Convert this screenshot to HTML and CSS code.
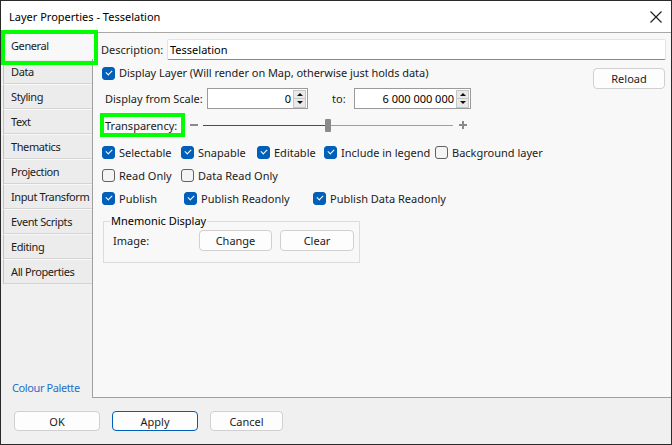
FILE: index.html
```html
<!DOCTYPE html>
<html>
<head>
<meta charset="utf-8">
<link rel="stylesheet" href="styles.css">
</head>
<body>
<div class="window">
  <div class="titlebar">
    <span class="title">Layer Properties - Tesselation</span>
    <svg class="close" width="12" height="12" viewBox="0 0 12 12"><path d="M0.5 0.5L11.5 11.5M11.5 0.5L0.5 11.5" stroke="#1b1b1b" stroke-width="1.1" fill="none"/></svg>
  </div>
  <div class="main">
    <div class="sidebar">
      <ul class="tabs">
        <li class="tab active">General</li>
        <li class="tab">Data</li>
        <li class="tab">Styling</li>
        <li class="tab">Text</li>
        <li class="tab">Thematics</li>
        <li class="tab">Projection</li>
        <li class="tab">Input Transform</li>
        <li class="tab">Event Scripts</li>
        <li class="tab">Editing</li>
        <li class="tab">All Properties</li>
      </ul>
      <a class="palette">Colour Palette</a>
    </div>
    <div class="panel">
      <div class="row desc-row">
        <span class="desc-label">Description:</span>
        <div class="textbox">Tesselation</div>
      </div>
      <div class="row layer-row">
        <span class="box checked first"></span>
        <span class="layer-text">Display Layer (Will render on Map, otherwise just holds data)</span>
        <button class="btn reload">Reload</button>
      </div>
      <div class="row scale-row">
        <span class="scale-label">Display from Scale:</span>
        <div class="spin s1"><span class="val">0</span><span class="arrows"><span class="up"></span><span class="down"></span></span></div>
        <span class="to-label">to:</span>
        <div class="spin s2"><span class="val">6 000 000 000</span><span class="arrows"><span class="up"></span><span class="down"></span></span></div>
      </div>
      <div class="row trans-row">
        <span class="trans-label">Transparency:</span>
        <span class="minus"></span>
        <div class="track">
          <span class="fill"></span>
          <span class="thumb"></span>
          <span class="rest"></span>
        </div>
        <span class="plus"></span>
      </div>
      <div class="row cbrow r1">
        <span class="chk w79"><span class="box checked"></span>Selectable</span>
        <span class="chk w76"><span class="box checked"></span>Snapable</span>
        <span class="chk w67"><span class="box checked"></span>Editable</span>
        <span class="chk w111"><span class="box checked"></span>Include in legend</span>
        <span class="chk"><span class="box"></span>Background layer</span>
      </div>
      <div class="row cbrow r2">
        <span class="chk w79"><span class="box"></span>Read Only</span>
        <span class="chk"><span class="box"></span>Data Read Only</span>
      </div>
      <div class="row cbrow r3">
        <span class="chk w82"><span class="box checked"></span>Publish</span>
        <span class="chk w129"><span class="box checked"></span>Publish Readonly</span>
        <span class="chk"><span class="box checked"></span>Publish Data Readonly</span>
      </div>
      <fieldset class="group">
        <legend>Mnemonic Display</legend>
        <div class="group-row">
          <span class="image-label">Image:</span>
          <button class="btn change">Change</button>
          <button class="btn clear">Clear</button>
        </div>
      </fieldset>
    </div>
  </div>
  <div class="footer">
    <button class="btn ok">OK</button>
    <button class="btn apply">Apply</button>
    <button class="btn cancel">Cancel</button>
  </div>
  <div class="hl hl-general"></div>
  <div class="hl hl-trans"></div>
</div>
</body>
</html>
```
FILE: styles.css
```css
* { box-sizing: border-box; }
body {
  margin: 0;
  background: #fff;
  font-family: "Noto Sans", sans-serif;
  font-size: 11px;
  color: #1b1b1b;
}
.window {
  position: relative;
  width: 672px;
  height: 445px;
  border: 1px solid #2a2a2a;
  display: flex;
  flex-direction: column;
  background: #f0f0f0;
  overflow: hidden;
}
.titlebar {
  flex: none;
  height: 32px;
  background: #fff;
  border-bottom: 1px solid #a8a8a8;
  display: flex;
  align-items: center;
  padding-left: 8px;
}
.title { color: #000; font-size: 11px; margin-top: -1px; }
.close { margin-left: auto; margin-right: 9px; }
.main { flex: none; display: flex; height: 365px; }
.sidebar {
  width: 91px;
  display: flex;
  flex-direction: column;
  background: #f0f0f0;
}
.tabs { list-style: none; margin: 0 0 0 2px; padding: 0; }
.tab {
  height: 25px;
  line-height: 23px;
  padding-left: 7px;
  background: #ececec;
  border-left: 1px solid #c2c2c2;
  border-top: 1px solid #f8f8f8;
  border-bottom: 1px solid #d4d4d4;
  white-space: nowrap;
  letter-spacing: -0.4px;
}
.tab.active {
  height: 26px;
  background: #f8f8f8;
  border-color: #f8f8f8;
  margin-right: -1px;
  position: relative;
}
.palette {
  margin-top: auto;
  margin-bottom: 3px;
  margin-left: 11px;
  line-height: 14px;
  color: #1f6fc5;
  letter-spacing: -0.4px;
}
.panel {
  flex: 1;
  background: #f8f8f8;
  border-left: 1px solid #a0a0a0;
  border-bottom: 1px solid #a0a0a0;
  padding: 6px 5px 0 8px;
}
.row { display: flex; align-items: center; }
.desc-row { height: 21px; }
.desc-label { width: 66px; }
.textbox {
  flex: 1;
  height: 21px;
  background: #fff;
  border: 1px solid #e3e3e3;
  border-bottom-color: #8a8a8a;
  border-radius: 2px;
  padding-left: 2px;
  line-height: 19px;
  color: #000;
}
.layer-row { height: 27px; margin-top: 1px; align-items: flex-start; }
.layer-row .box { margin-top: 6px; margin-left: 1px; margin-right: 4px; }
.layer-text { margin-top: 4px; line-height: 16px; letter-spacing: -0.05px; }
.btn {
  font-family: inherit;
  font-size: 11px;
  color: #1b1b1b;
  background: #fdfdfd;
  border: 1px solid #d0d0d0;
  border-radius: 4px;
  padding: 0;
  height: 21px;
}
.reload { margin-left: auto; margin-top: 7px; margin-right: 1px; width: 72px; }
.scale-row { height: 21px; }
.scale-label { margin-left: 4px; width: 102px; }
.spin {
  height: 21px;
  background: #fff;
  border: 1px solid #9a9a9a;
  display: flex;
  align-items: center;
  color: #000;
}
.s1 { width: 101px; }
.s2 { width: 117px; }
.val { flex: 1; text-align: right; padding-right: 2px; }
.arrows {
  width: 13px;
  height: 18px;
  margin-right: 1px;
  display: flex;
  flex-direction: column;
  border: 1px solid #c6c6c6;
  background: #e9e9e9;
}
.up, .down { flex: 1; position: relative; }
.up { border-bottom: 1px solid #c6c6c6; }
.up::after, .down::after {
  content: "";
  position: absolute;
  left: 3px;
  width: 0;
  height: 0;
  border-left: 3px solid transparent;
  border-right: 3px solid transparent;
}
.up::after { top: 2px; border-bottom: 3px solid #111; }
.down::after { top: 2px; border-top: 3px solid #111; }
.to-label { margin-left: 24px; width: 22px; }
.trans-row { height: 22px; margin-top: 5px; }
.trans-label { margin-left: 4px; width: 85px; }
.minus { width: 8px; height: 2px; background: #8a8a8a; }
.track {
  margin-left: 5px;
  width: 250px;
  height: 14px;
  display: flex;
  align-items: center;
}
.fill { width: 122px; height: 1px; background: #005fb8; }
.thumb { width: 6px; height: 13px; background: #8a8a8a; border-radius: 1px; }
.rest { flex: 1; height: 1px; background: #a0a0a0; }
.plus { margin-left: 6px; width: 8px; height: 8px; position: relative; }
.plus::before, .plus::after { content: ""; position: absolute; background: #8a8a8a; }
.plus::before { left: 0; top: 3px; width: 8px; height: 2px; }
.plus::after { left: 3px; top: 0; width: 2px; height: 8px; }
.cbrow { height: 20px; margin-top: 3px; }
.r1 { margin-top: 6px; }
.chk { display: flex; align-items: center; white-space: nowrap; }
.cbrow .chk:first-child { margin-left: 1px; }
.w79 { width: 79px; }
.w76 { width: 76px; }
.w67 { width: 67px; }
.w111 { width: 111px; }
.w82 { width: 82px; }
.w129 { width: 129px; }
.box {
  flex: none;
  width: 13px;
  height: 13px;
  border: 1px solid #616161;
  border-radius: 3px;
  background: #f4f4f4;
  margin-right: 4px;
  position: relative;
}
.box.checked { background: #005fb8; border-color: #005fb8; }
.box.checked::after {
  content: "";
  position: absolute;
  left: 3px;
  top: 2px;
  width: 5px;
  height: 3px;
  border-left: 1px solid #fff;
  border-bottom: 1px solid #fff;
  transform: rotate(-45deg);
}
.group {
  margin: 6px 0 0 2px;
  width: 257px;
  border: 1px solid #dcdcdc;
  padding: 0 0 11px 6px;
}
.group legend { padding: 0 1px; line-height: 14px; color: #000; }
.group-row { display: flex; align-items: center; height: 21px; margin-top: 2px; }
.image-label { margin-left: 3px; width: 86px; }
.change { width: 73px; }
.clear { width: 74px; margin-left: 8px; }
.footer {
  flex: 1;
  display: flex;
  gap: 12px;
  padding: 13px 0 0 13px;
  background: #f0f0f0;
}
.footer .btn { height: 20px; }
.ok { width: 86px; }
.apply { width: 86px; border-color: #005fb8; }
.cancel { width: 73px; }
.hl { position: absolute; border: 4px solid #00ff00; }
.hl-general { left: 0; top: 29px; width: 97px; height: 35px; }
.hl-trans { left: 99px; top: 112px; width: 85px; height: 24px; }
```
